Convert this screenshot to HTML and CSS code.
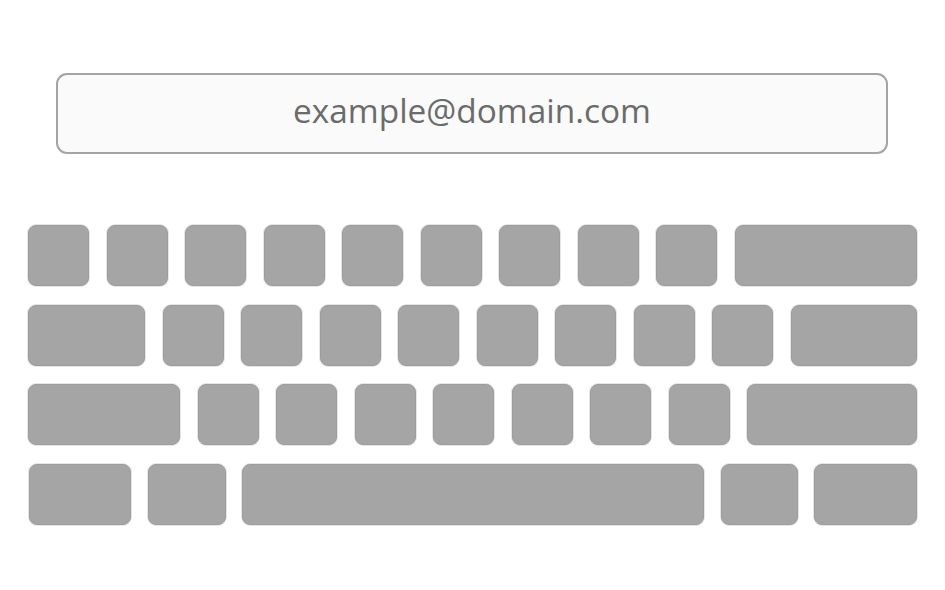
FILE: index.html
```html
<!DOCTYPE html>
<html>
<head>
<meta charset="utf-8">
<link rel="stylesheet" href="styles.css">
</head>
<body>
<div class="page">
  <div class="field">example@domain.com</div>
  <div class="keyboard">
    <div class="row">
      <div class="key"></div><div class="key"></div><div class="key"></div><div class="key"></div><div class="key"></div><div class="key"></div><div class="key"></div><div class="key"></div><div class="key"></div>
      <div class="key w-back"></div>
    </div>
    <div class="row">
      <div class="key w-tab"></div>
      <div class="key"></div><div class="key"></div><div class="key"></div><div class="key"></div><div class="key"></div><div class="key"></div><div class="key"></div><div class="key"></div>
      <div class="key w-fill"></div>
    </div>
    <div class="row">
      <div class="key w-caps"></div>
      <div class="key"></div><div class="key"></div><div class="key"></div><div class="key"></div><div class="key"></div><div class="key"></div><div class="key"></div>
      <div class="key w-fill"></div>
    </div>
    <div class="row last">
      <div class="key w-num"></div>
      <div class="key w-mid"></div>
      <div class="key w-space"></div>
      <div class="key w-mid2"></div>
      <div class="key w-fill"></div>
    </div>
  </div>
</div>
</body>
</html>
```
FILE: styles.css
```css
html, body {
  margin: 0;
  padding: 0;
  background: #ffffff;
}
.page {
  width: 945px;
  height: 590px;
  padding-top: 73px;
  box-sizing: border-box;
  font-family: "Open Sans", "Liberation Sans", sans-serif;
}
.field {
  margin-left: 56px;
  width: 832px;
  height: 81px;
  box-sizing: border-box;
  border: 2px solid #a4a4a4;
  border-radius: 11px;
  background: #fafafa;
  color: #6b6b6b;
  font-size: 33.4px;
  display: flex;
  align-items: center;
  justify-content: center;
  padding-bottom: 7px;
}
.keyboard {
  margin-top: 71px;
  margin-left: 28px;
  width: 889px;
  display: flex;
  flex-direction: column;
  gap: 18.5px;
}
.row {
  display: flex;
  gap: 17.5px;
  height: 61px;
}
.row.last {
  gap: 16.5px;
  padding-left: 1px;
}
.key {
  width: 61px;
  flex: none;
  background: #a5a5a5;
  border: 1px solid #9d9d9d;
  box-shadow: 0 0 0 1px #e6e6e6;
  border-radius: 8px;
  box-sizing: border-box;
}
.w-back, .w-fill {
  flex: 1;
}
.w-tab { width: 117px; }
.w-caps { width: 152px; }
.w-num { width: 102px; }
.w-mid { width: 78px; }
.w-space { width: 462px; }
.w-mid2 { width: 77px; }
```
